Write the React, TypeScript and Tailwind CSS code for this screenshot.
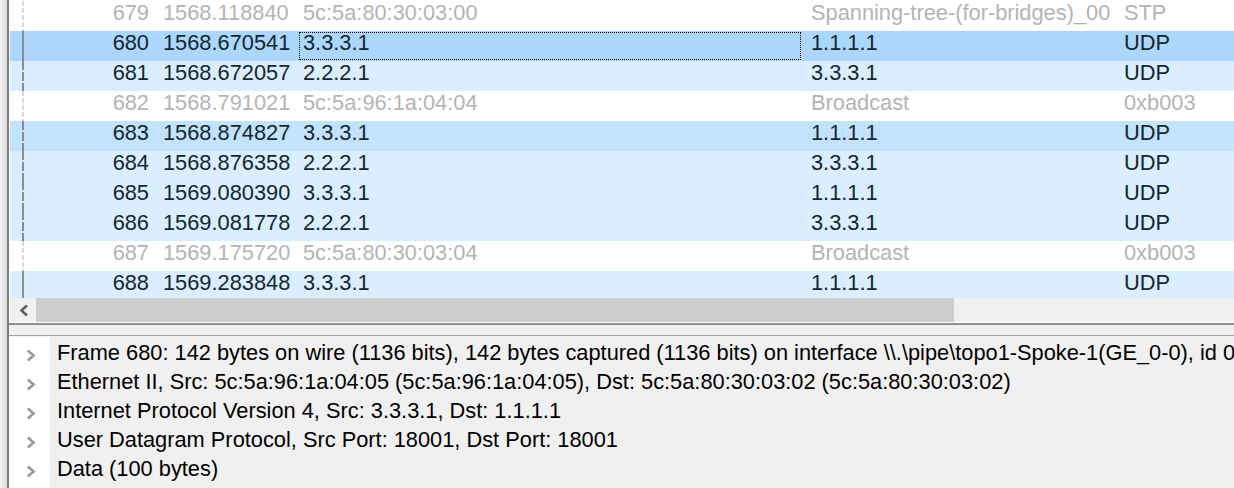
import React from 'react';

type RowKind = 'dim' | 'udp' | 'sel' | 'hover';

interface Packet {
  no: number;
  time: string;
  src: string;
  dst: string;
  proto: string;
  kind: RowKind;
  line: 'light' | 'dash' | 'solid';
}

const packets: Packet[] = [
  { no: 679, time: '1568.118840', src: '5c:5a:80:30:03:00', dst: 'Spanning-tree-(for-bridges)_00', proto: 'STP', kind: 'dim', line: 'light' },
  { no: 680, time: '1568.670541', src: '3.3.3.1', dst: '1.1.1.1', proto: 'UDP', kind: 'sel', line: 'solid' },
  { no: 681, time: '1568.672057', src: '2.2.2.1', dst: '3.3.3.1', proto: 'UDP', kind: 'udp', line: 'dash' },
  { no: 682, time: '1568.791021', src: '5c:5a:96:1a:04:04', dst: 'Broadcast', proto: '0xb003', kind: 'dim', line: 'light' },
  { no: 683, time: '1568.874827', src: '3.3.3.1', dst: '1.1.1.1', proto: 'UDP', kind: 'hover', line: 'dash' },
  { no: 684, time: '1568.876358', src: '2.2.2.1', dst: '3.3.3.1', proto: 'UDP', kind: 'udp', line: 'dash' },
  { no: 685, time: '1569.080390', src: '3.3.3.1', dst: '1.1.1.1', proto: 'UDP', kind: 'udp', line: 'dash' },
  { no: 686, time: '1569.081778', src: '2.2.2.1', dst: '3.3.3.1', proto: 'UDP', kind: 'udp', line: 'dash' },
  { no: 687, time: '1569.175720', src: '5c:5a:80:30:03:04', dst: 'Broadcast', proto: '0xb003', kind: 'dim', line: 'light' },
  { no: 688, time: '1569.283848', src: '3.3.3.1', dst: '1.1.1.1', proto: 'UDP', kind: 'udp', line: 'solid' },
];

const details = [
  'Frame 680: 142 bytes on wire (1136 bits), 142 bytes captured (1136 bits) on interface \\\\.\\pipe\\topo1-Spoke-1(GE_0-0), id 0',
  'Ethernet II, Src: 5c:5a:96:1a:04:05 (5c:5a:96:1a:04:05), Dst: 5c:5a:80:30:03:02 (5c:5a:80:30:03:02)',
  'Internet Protocol Version 4, Src: 3.3.3.1, Dst: 1.1.1.1',
  'User Datagram Protocol, Src Port: 18001, Dst Port: 18001',
  'Data (100 bytes)',
];

const rowBg: Record<RowKind, string> = {
  dim: 'bg-white text-[#b4b4b4]',
  udp: 'bg-[#daeeff] text-[#12272e]',
  sel: 'bg-[#acd6fc] text-[#12272e]',
  hover: 'bg-[#c3e2fe] text-[#12272e]',
};

const RelatedLine: React.FC<{ line: Packet['line'] }> = ({ line }) => (
  <svg width="2" height="30" className="shrink-0">
    {line === 'light' && <line x1="1" y1="0" x2="1" y2="30" stroke="#d9d9d9" strokeWidth="2" strokeDasharray="5 2" />}
    {line === 'dash' && <line x1="1" y1="0" x2="1" y2="30" stroke="#8c8c8c" strokeWidth="2" strokeDasharray="9 2" />}
    {line === 'solid' && <line x1="1" y1="0" x2="1" y2="30" stroke="#8c8c8c" strokeWidth="2" />}
  </svg>
);

const PacketRow: React.FC<{ p: Packet }> = ({ p }) => {
  const focused = p.kind === 'sel';
  return (
    <div className={`flex h-[30px] shrink-0 leading-[24px] whitespace-nowrap ${rowBg[p.kind]}`}>
      <div className="flex w-[145px] shrink-0">
        <div className="w-[12px] shrink-0" />
        <RelatedLine line={p.line} />
        <div className="flex-1 text-right pr-[6px]">{p.no}</div>
      </div>
      <div className="w-[142px] shrink-0 pl-[8px]">{p.time}</div>
      <div className="w-[506px] shrink-0 px-[2px] pt-[1px]">
        <div
          className={`h-[28px] pl-[3px] leading-[20px] border ${
            focused ? 'border-dotted border-black' : 'border-transparent'
          }`}
        >
          {p.src}
        </div>
      </div>
      <div className="w-[314px] shrink-0 pl-[8px]">{p.dst}</div>
      <div className="flex-1 pl-[7px]">{p.proto}</div>
    </div>
  );
};

const Chevron: React.FC = () => (
  <svg width="10" height="13" viewBox="0 0 10 13" className="shrink-0">
    <path d="M1.8 1.5 L7.6 6.5 L1.8 11.5" fill="none" stroke="#999999" strokeWidth="2.6" />
  </svg>
);

export default function App() {
  return (
    <div
      className="flex w-[1234px] h-[488px] overflow-hidden bg-white text-[21.8px]"
      style={{ fontFamily: '"Liberation Sans", Arial, sans-serif' }}
    >
      <div className="w-[7px] shrink-0 bg-gradient-to-r from-[#f4f4f4] to-[#d9d9d9]" />
      <div className="w-[2px] shrink-0 bg-[#7c7c7c]" />

      <div className="flex flex-col flex-1 min-w-0">
        {/* packet list */}
        <div className="h-[298px] shrink-0 overflow-hidden pl-[1px] pt-[1px]">
          {packets.map((p) => (
            <PacketRow key={p.no} p={p} />
          ))}
        </div>

        {/* horizontal scrollbar */}
        <div className="flex h-[24px] shrink-0 pl-[1px]">
          <div className="flex w-[26px] shrink-0 items-center justify-center bg-[#f0f0f0] pl-[2px]">
            <svg width="11" height="13" viewBox="0 0 11 13">
              <path d="M8 1.5 L2.5 6.5 L8 11.5" fill="none" stroke="#606060" strokeWidth="2.6" />
            </svg>
          </div>
          <div className="w-[918px] shrink-0 bg-[#cdcdcd]" />
          <div className="flex-1 bg-[#f0f0f0]" />
        </div>

        {/* splitter */}
        <div className="h-[1px] shrink-0 bg-white" />
        <div className="h-[2px] shrink-0 bg-[#8e8e8e]" />
        <div className="h-[10px] shrink-0 bg-[#f0f0f0]" />
        <div className="h-[1px] shrink-0 bg-[#a0a0a0]" />

        {/* packet details */}
        <div className="flex flex-1 min-h-0 bg-[#f0f0f0]">
          <div className="flex flex-col w-[41px] shrink-0 bg-white pt-[4px] pl-[17px] mt-[1px]">
            {details.map((d) => (
              <div key={d} className="flex h-[29px] items-start pt-[8px]">
                <Chevron />
              </div>
            ))}
          </div>
          <div className="flex flex-col flex-1 min-w-0 pt-[5px] pl-[7px] text-black">
            {details.map((d) => (
              <div key={d} className="h-[29px] leading-[24px] whitespace-nowrap overflow-hidden">
                {d}
              </div>
            ))}
          </div>
        </div>
      </div>
    </div>
  );
}
